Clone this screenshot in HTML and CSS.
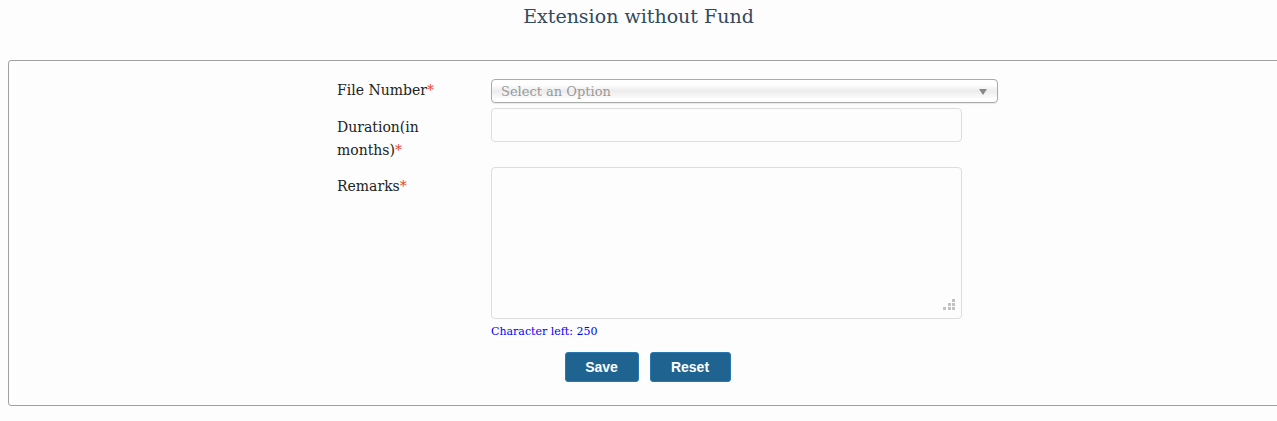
FILE: index.html
```html
<!DOCTYPE html>
<html>
<head>
<meta charset="utf-8">
<link rel="stylesheet" href="styles.css">
</head>
<body>
<h1 class="title">Extension without Fund</h1>
<div class="panel">
  <form class="form">
    <div class="row">
      <label class="lbl lbl-first">File Number<span class="req">*</span></label>
      <div class="field">
        <div class="select">
          <span class="placeholder">Select an Option</span>
          <span class="arrow"></span>
        </div>
      </div>
    </div>
    <div class="row">
      <label class="lbl">Duration(in months)<span class="req">*</span></label>
      <div class="field">
        <input class="input" type="text">
      </div>
    </div>
    <div class="row">
      <label class="lbl">Remarks<span class="req">*</span></label>
      <div class="field">
        <div class="ta-wrap">
          <textarea class="textarea"></textarea>
          <svg class="grip" width="12" height="12" viewBox="0 0 12 12">
            <rect x="9" y="0" width="3" height="3" fill="#c2c2c2"/>
            <rect x="5" y="4" width="3" height="3" fill="#c2c2c2"/>
            <rect x="9" y="4" width="3" height="3" fill="#c2c2c2"/>
            <rect x="0" y="8" width="3" height="3" fill="#c2c2c2"/>
            <rect x="5" y="8" width="3" height="3" fill="#c2c2c2"/>
            <rect x="9" y="8" width="3" height="3" fill="#c2c2c2"/>
          </svg>
        </div>
        <div class="counter">Character left: 250</div>
      </div>
    </div>
    <div class="actions">
      <button type="button" class="btn btn-save">Save</button>
      <button type="button" class="btn btn-reset">Reset</button>
    </div>
  </form>
</div>
</body>
</html>
```
FILE: styles.css
```css
html, body {
  margin: 0;
  padding: 0;
  background: #fcfdfc;
  overflow: hidden;
}
body {
  font-family: "DejaVu Serif", "Liberation Serif", serif;
  color: #222;
}
.title {
  margin: 0;
  padding-top: 4px;
  height: 60px;
  box-sizing: border-box;
  text-align: center;
  font-weight: normal;
  font-size: 19px;
  line-height: 24px;
  color: #34495e;
}
.panel {
  margin-left: 8px;
  width: 1300px;
  height: 346px;
  box-sizing: border-box;
  border: 1px solid #a0a0a0;
  border-radius: 3px;
  background: #fcfdfc;
  padding-top: 18px;
}
.form {
  margin-left: 328px;
  width: 625px;
}
.row {
  display: flex;
  margin-bottom: 5px;
}
.lbl {
  flex: 0 0 124px;
  margin-right: 30px;
  padding-top: 8px;
  font-size: 14px;
  line-height: 23px;
  color: #222;
}
.lbl-first {
  padding-top: 0;
}
.req {
  color: #e5462e;
}
.field {
  flex: 0 0 471px;
  min-width: 0;
  display: flex;
  flex-direction: column;
}
.select {
  width: 507px;
  height: 24px;
  box-sizing: border-box;
  border: 1px solid #aaa;
  border-radius: 4px;
  background: linear-gradient(#ffffff 20%, #ececec 50%, #ffffff 90%);
  box-shadow: 0 1px 1px rgba(0,0,0,0.08);
  display: flex;
  align-items: center;
  justify-content: space-between;
  padding: 0 10px 0 9px;
}
.placeholder {
  font-size: 13px;
  color: #999;
}
.arrow {
  width: 0;
  height: 0;
  border-left: 4px solid transparent;
  border-right: 4px solid transparent;
  border-top: 6px solid #888;
  margin-top: 2px;
}
.input {
  width: 471px;
  height: 34px;
  box-sizing: border-box;
  border: 1px solid #ddd;
  border-radius: 4px;
  background: #fcfdfc;
  margin: 0;
}
.ta-wrap {
  position: relative;
  width: 471px;
  height: 152px;
}
.textarea {
  width: 471px;
  height: 152px;
  box-sizing: border-box;
  border: 1px solid #ddd;
  border-radius: 4px;
  background: #fcfdfc;
  margin: 0;
  display: block;
  resize: none;
}
.grip {
  position: absolute;
  right: 7px;
  bottom: 8px;
}
.counter {
  font-size: 11px;
  line-height: 14px;
  color: #0000ff;
  margin-top: 6px;
}
.actions {
  display: flex;
  justify-content: center;
  gap: 11px;
  margin-top: 13px;
  padding-right: 4px;
}
.btn {
  height: 30px;
  box-sizing: border-box;
  border: 1px solid #2a78b0;
  border-radius: 3px;
  background: #1f6391;
  color: #fff;
  font-family: "Liberation Sans", Arial, sans-serif;
  font-weight: bold;
  font-size: 14px;
  padding: 0;
}
.btn-save { width: 74px; }
.btn-reset { width: 81px; }
```
